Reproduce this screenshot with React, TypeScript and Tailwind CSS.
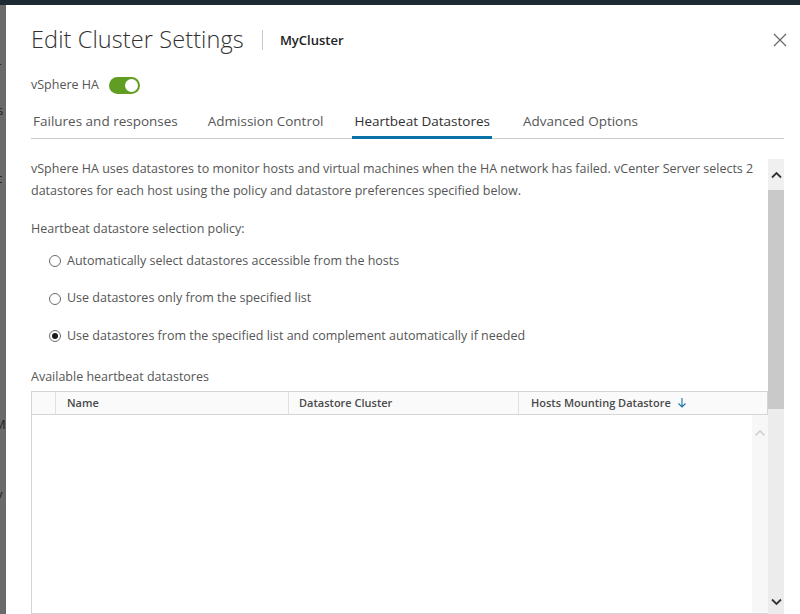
import React from "react";

function Radio({ checked, label }: { checked?: boolean; label: string }) {
  return (
    <div className="flex items-center h-[20px]">
      <span className="w-[12px] h-[12px] rounded-full border border-[#6b6b6b] bg-white flex items-center justify-center mr-[6px] ml-[18px]">
        {checked && <span className="w-[6px] h-[6px] rounded-full bg-[#1a1a1a]" />}
      </span>
      <span>{label}</span>
    </div>
  );
}

export default function App() {
  return (
    <div
      className="w-[800px] h-[614px] overflow-hidden flex flex-col bg-[#6a6a6a]"
      style={{ fontFamily: "'Open Sans', 'Liberation Sans', sans-serif" }}
    >
      <div className="h-[5px] bg-[#1d2a33] shrink-0" />
      <div className="flex flex-1 min-h-0">
        <div className="w-[6px] shrink-0 bg-[#6a6a6a] relative overflow-hidden text-[13px] text-[#222]">
          <div className="absolute left-[-4px] top-[52px]">r</div>
          <div className="absolute left-[-3px] top-[96px]">s</div>
          <div className="absolute left-[-4px] top-[164px]">c</div>
          <div className="absolute left-[-6px] top-[410px]">M</div>
          <div className="absolute left-[-4px] top-[480px]">v</div>
        </div>
        <div className="flex-1 bg-white flex flex-col min-w-0 pl-[25px]">
          {/* header */}
          <div className="flex items-center h-[66px] pt-[4px] pr-[12px]">
            <div className="text-[23.5px] font-light text-[#313131] tracking-[0.1px] leading-none">Edit Cluster Settings</div>
            <div className="w-px h-[20px] bg-[#c8c8c8] ml-[18px] mr-[17px]" />
            <div className="text-[13px] font-semibold text-[#222] leading-none">MyCluster</div>
            <div className="flex-1" />
            <svg width="14" height="14" viewBox="0 0 14 14" className="mr-[1px]">
              <path d="M1 1 L13 13 M13 1 L1 13" stroke="#6a6a6a" strokeWidth="1.3" fill="none" />
            </svg>
          </div>
          {/* vSphere HA toggle */}
          <div className="flex items-center h-[28px] text-[12.5px] text-[#565656]">
            <span>vSphere HA</span>
            <span className="ml-[10px] w-[31px] h-[17px] rounded-full bg-[#5f9e22] flex items-center justify-end pr-[2px]">
              <span className="w-[13px] h-[13px] rounded-full bg-white" />
            </span>
          </div>
          {/* tabs */}
          <div className="mr-[16px] mt-[10px] border-b border-[#cccccc] flex text-[13.5px] text-[#565656] h-[30px]">
            <div className="px-[2px] pt-[2px]">Failures and responses</div>
            <div className="ml-[26px] px-[2px] pt-[2px]">Admission Control</div>
            <div className="ml-[27px] px-[2px] pt-[2px] text-[#313131] border-b-[3px] border-[#0a72a6] -mb-px">Heartbeat Datastores</div>
            <div className="ml-[29px] px-[2px] pt-[2px]">Advanced Options</div>
          </div>
          {/* scroll area */}
          <div className="flex flex-1 min-h-0 mt-[20px] mr-[16px]">
            <div className="flex-1 min-w-0 text-[12.5px] text-[#565656] flex flex-col">
              <div className="leading-[22px] -mt-[1px] pr-[4px]">
                vSphere HA uses datastores to monitor hosts and virtual machines when the HA network has failed. vCenter Server selects 2 datastores for each host using the policy and datastore preferences specified below.
              </div>
              <div className="mt-[17px] leading-[20px]">Heartbeat datastore selection policy:</div>
              <div className="mt-[12px] flex flex-col gap-[17.5px]">
                <Radio label="Automatically select datastores accessible from the hosts" />
                <Radio label="Use datastores only from the specified list" />
                <Radio checked label="Use datastores from the specified list and complement automatically if needed" />
              </div>
              <div className="mt-[21px] leading-[20px]">Available heartbeat datastores</div>
              <div className="mt-[4px] flex-1 border border-[#d5d5d5] border-r-0 flex flex-col min-h-0">
                <div className="h-[23px] bg-[#fafafa] border-b border-[#d5d5d5] flex text-[11px] font-semibold text-[#4a4a4a] items-center shrink-0">
                  <div className="w-[24px] h-full border-r border-[#e0e0e0]" />
                  <div className="w-[233px] h-full border-r border-[#e0e0e0] pl-[11px] flex items-center">Name</div>
                  <div className="w-[230px] h-full border-r border-[#e0e0e0] pl-[10px] flex items-center">Datastore Cluster</div>
                  <div className="flex-1 h-full pl-[12px] flex items-center border-r border-[#d5d5d5]">
                    Hosts Mounting Datastore
                    <svg width="10" height="12" viewBox="0 0 10 12" className="ml-[6px]">
                      <path d="M5 1 V10 M1.5 6.5 L5 10 L8.5 6.5" stroke="#1b73a8" strokeWidth="1.1" fill="none" />
                    </svg>
                  </div>
                </div>
                <div className="flex flex-1">
                  <div className="flex-1" />
                  <div className="w-[16px] bg-[#f7f7f7] flex justify-center pt-[14px]">
                    <svg width="12" height="8" viewBox="0 0 12 8">
                      <path d="M1.5 6.5 L6 2 L10.5 6.5" stroke="#d0d0d0" strokeWidth="1.6" fill="none" />
                    </svg>
                  </div>
                </div>
              </div>
            </div>
            {/* outer scrollbar */}
            <div className="w-[16px] bg-[#ececec] flex flex-col shrink-0">
              <div className="h-[31px] bg-[#f0f0f0] flex justify-center pt-[12px]">
                <svg width="11" height="8" viewBox="0 0 11 8">
                  <path d="M1 6.5 L5.5 2 L10 6.5" stroke="#333" strokeWidth="1.8" fill="none" />
                </svg>
              </div>
              <div className="h-[219px] bg-[#c9c9c9]" />
              <div className="flex-1" />
              <div className="h-[20px] flex justify-center pt-[4px]">
                <svg width="11" height="8" viewBox="0 0 11 8">
                  <path d="M1 1.5 L5.5 6 L10 1.5" stroke="#333" strokeWidth="1.8" fill="none" />
                </svg>
              </div>
            </div>
          </div>
        </div>
      </div>
    </div>
  );
}
